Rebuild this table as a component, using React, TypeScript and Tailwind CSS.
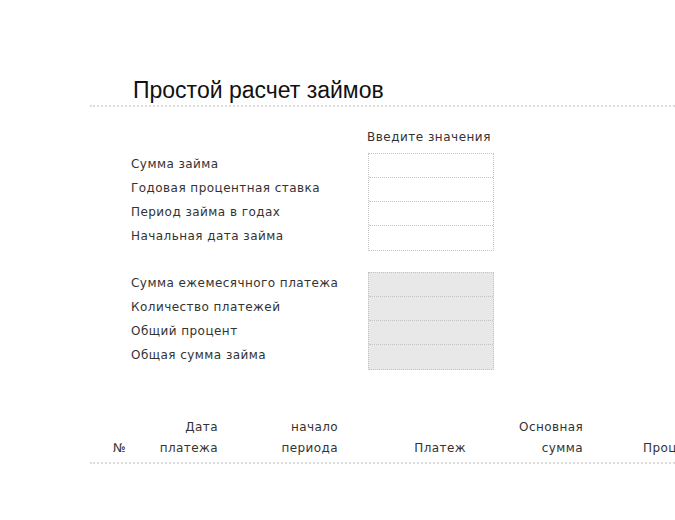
const inputRows = [
  "Сумма займа",
  "Годовая процентная ставка",
  "Период займа в годах",
  "Начальная дата займа",
];

const resultRows = [
  "Сумма ежемесячного платежа",
  "Количество платежей",
  "Общий процент",
  "Общая сумма займа",
];

const FieldGroup = ({ rows, filled }: { rows: string[]; filled?: boolean }) => (
  <div className="flex">
    <div className="w-[237px] shrink-0 flex flex-col pt-[1px]">
      {rows.map((label) => (
        <div key={label} className="h-[24px] flex items-center text-[12px] tracking-[0.45px] text-[#333]">
          <span className="-mt-[4px]">{label}</span>
        </div>
      ))}
    </div>
    <div
      className={`w-[126px] shrink-0 border border-dotted border-[#c4c4c4] ${
        filled ? "bg-[#e8e8e8]" : "bg-white"
      }`}
    >
      {rows.map((label, i) => (
        <div
          key={label}
          className={`h-[24px] ${i < rows.length - 1 ? "border-b border-dotted border-[#c4c4c4]" : ""}`}
        />
      ))}
    </div>
  </div>
);

export default function App() {
  return (
    <div
      className="w-[675px] h-[520px] overflow-hidden bg-white pt-[75px]"
      style={{ fontFamily: '"DejaVu Sans", Verdana, sans-serif' }}
    >
      <div className="ml-[90px] border-b-2 border-dotted border-[#dcdcdc]">
        <h1
          className="pl-[43px] text-[23px] leading-[30px] text-[#111]"
          style={{ fontFamily: '"Liberation Sans", Arial, sans-serif' }}
        >
          Простой расчет займов
        </h1>
      </div>

      <div className="ml-[131px] mt-[22px]">
        <div className="pl-[236px] h-[24px] text-[12px] tracking-[0.5px] text-[#333] leading-[16px]">
          Введите значения
        </div>
        <FieldGroup rows={inputRows} />
        <div className="h-[21px]" />
        <FieldGroup rows={resultRows} filled />
      </div>

      <div className="ml-[90px] mt-[47px] border-b-2 border-dotted border-[#dcdcdc] pb-[3px]">
        <div className="flex items-end text-[12px] leading-[21px] tracking-[0.4px] text-[#333] whitespace-nowrap">
          <div className="w-[50px] shrink-0 pl-[23px]">№</div>
          <div className="w-[78px] shrink-0 text-right">
            Дата
            <br />
            платежа
          </div>
          <div className="w-[120px] shrink-0 text-right">
            начало
            <br />
            периода
          </div>
          <div className="w-[128px] shrink-0 text-right">Платеж</div>
          <div className="w-[117px] shrink-0 text-right">
            Основная
            <br />
            сумма
          </div>
          <div className="shrink-0 pl-[60px]">Проценты</div>
        </div>
      </div>
    </div>
  );
}
